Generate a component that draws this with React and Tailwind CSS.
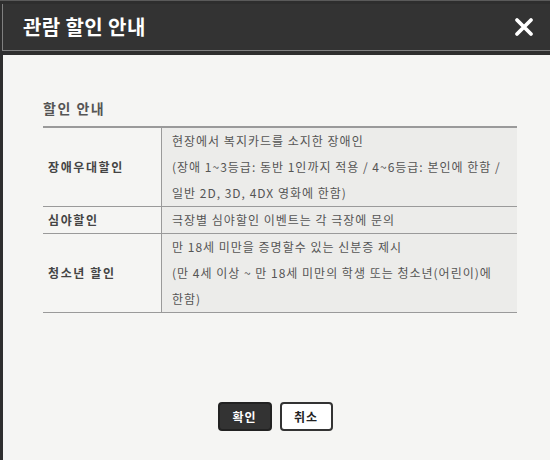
import React from "react";

const font = { fontFamily: '"Noto Sans CJK KR", "Noto Sans", sans-serif' };

const rows = [
  {
    label: "장애우대할인",
    lines: [
      "현장에서 복지카드를 소지한 장애인",
      "(장애 1~3등급: 동반 1인까지 적용 / 4~6등급: 본인에 한함 /",
      "일반 2D, 3D, 4DX 영화에 한함)",
    ],
  },
  { label: "심야할인", lines: ["극장별 심야할인 이벤트는 각 극장에 문의"] },
  {
    label: "청소년 할인",
    lines: [
      "만 18세 미만을 증명할수 있는 신분증 제시",
      "(만 4세 이상 ~ 만 18세 미만의 학생 또는 청소년(어린이)에",
      "한함)",
    ],
  },
];

const App = () => {
  return (
    <div
      className="w-[550px] h-[460px] bg-[#2e2e2e] border-t border-[#5a5a5a] pt-[3px] pl-[2px] flex flex-col overflow-hidden"
      style={font}
    >
      {/* Header */}
      <div className="h-[47px] shrink-0 border-l border-b border-[#808080] bg-[#333] flex items-center justify-between pl-[20px] pr-[16px]">
        <h1 className="text-[20px] font-bold text-white tracking-[0.4px]">
          관람 할인 안내
        </h1>
        <svg width="20" height="20" viewBox="0 0 20 20">
          <path
            d="M3 3 L17 17 M17 3 L3 17"
            stroke="#fff"
            strokeWidth="3.8"
            strokeLinecap="round"
          />
        </svg>
      </div>

      {/* Body */}
      <div className="flex-1 mt-[4px] ml-[1px] bg-[#f5f5f3] flex flex-col pl-[40px] pr-[33px] pt-[43px]">
        <h2 className="text-[14px] font-bold text-[#555] leading-[20px] mb-[8px] tracking-[1.5px]">
          할인 안내
        </h2>

        <div className="border-t-2 border-[#9a9a9a] border-b border-b-[#9a9a9a]">
          {rows.map((row, i) => (
            <div
              key={row.label}
              className={`flex ${i > 0 ? "border-t border-[#9a9a9a]" : ""}`}
            >
              <div className="w-[119px] shrink-0 flex items-center pl-[5px] text-[12px] font-bold text-[#444] tracking-[1.6px] border-r border-[#9a9a9a]">
                {row.label}
              </div>
              <div className="flex-1 bg-[#ececea] pl-[10px] text-[12px] text-[#555] leading-[26px] tracking-[1px] whitespace-nowrap">
                {row.lines.map((l) => (
                  <div key={l}>{l}</div>
                ))}
              </div>
            </div>
          ))}
        </div>

        {/* Buttons */}
        <div className="mt-auto mb-[29px] flex justify-center gap-[8px] pr-[10px]">
          <button className="w-[54px] h-[29px] rounded-[4px] bg-[#333] border-2 border-[#222] text-white text-[12px] font-bold tracking-[1px]">
            확인
          </button>
          <button className="w-[53px] h-[29px] rounded-[4px] bg-white border-2 border-[#333] text-[#222] text-[12px] font-bold tracking-[1px]">
            취소
          </button>
        </div>
      </div>
    </div>
  );
};

export default App;
